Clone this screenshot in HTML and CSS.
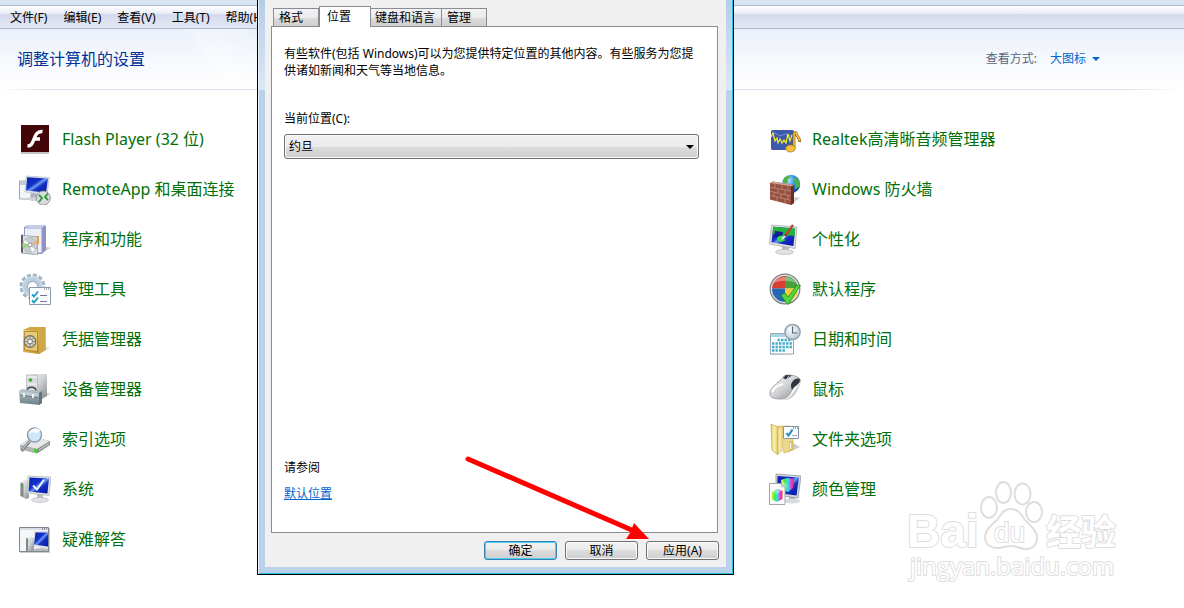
FILE: index.html
```html
<!DOCTYPE html>
<html lang="zh-CN">
<head>
<meta charset="utf-8">
<title>控制面板</title>
<link rel="stylesheet" href="styles.css">
</head>
<body>
<svg class="defs" width="0" height="0" aria-hidden="true">
  <defs>
    <linearGradient id="blue" x1="0" y1="0" x2="1" y2="1"><stop offset="0" stop-color="#0a1fae"/><stop offset=".4" stop-color="#1433cc"/><stop offset=".5" stop-color="#6f9bf0"/><stop offset=".62" stop-color="#1531c4"/><stop offset="1" stop-color="#0513a0"/></linearGradient>
    <linearGradient id="metal" x1="0" y1="0" x2="1" y2="1"><stop offset="0" stop-color="#fafafa"/><stop offset=".5" stop-color="#cfd1d4"/><stop offset="1" stop-color="#85888c"/></linearGradient>
    <linearGradient id="gold" x1="0" y1="0" x2="1" y2="1"><stop offset="0" stop-color="#f3de94"/><stop offset=".5" stop-color="#dcb64c"/><stop offset="1" stop-color="#a67a19"/></linearGradient>
    <linearGradient id="folder" x1="0" y1="0" x2="1" y2="0"><stop offset="0" stop-color="#e8cf6e"/><stop offset=".5" stop-color="#faf0b0"/><stop offset="1" stop-color="#e2c257"/></linearGradient>
    <linearGradient id="steel" x1="0" y1="0" x2="0" y2="1"><stop offset="0" stop-color="#b9c6cd"/><stop offset="1" stop-color="#6d7f89"/></linearGradient>
    <linearGradient id="rainbow" x1="0" y1="0" x2="1" y2="0"><stop offset="0" stop-color="#f5f233"/><stop offset=".3" stop-color="#43e552"/><stop offset=".55" stop-color="#2be4ef"/><stop offset=".78" stop-color="#ee35e0"/><stop offset="1" stop-color="#f33333"/></linearGradient>
    <radialGradient id="globe" cx=".35" cy=".3" r=".8"><stop offset="0" stop-color="#b6e8ff"/><stop offset=".5" stop-color="#2e8ad8"/><stop offset="1" stop-color="#0b3a93"/></radialGradient>
    <radialGradient id="dial" cx=".4" cy=".35" r=".7"><stop offset="0" stop-color="#fff"/><stop offset="1" stop-color="#b8c6d2"/></radialGradient>
  </defs>
</svg>

<div class="window">
  <div class="toolbar-edge"></div>
  <nav class="menubar" aria-label="菜单">
    <button type="button">文件(F)</button>
    <button type="button">编辑(E)</button>
    <button type="button">查看(V)</button>
    <button type="button">工具(T)</button>
    <button type="button">帮助(H)</button>
  </nav>
  <header class="heading">
    <h1>调整计算机的设置</h1>
    <div class="view-by"><span>查看方式:</span><button type="button">大图标</button></div>
  </header>

  <main class="items">
    <ul class="column">
      <li><a href="#">
        <svg viewBox="0 0 32 32"><rect x="2" y="3" width="28" height="28" fill="#999" opacity=".6"/><rect x="2" y="2" width="28" height="27" fill="#430507"/><path d="M23.500 8.500C18 8 16.500 12 15 16s-2.500 7-6.500 7M14.500 16H21" fill="none" stroke="#fff" stroke-width="3.400"/></svg>
        <span>Flash Player (32 位)</span></a></li>
      <li><a href="#">
        <svg viewBox="0 0 32 32"><path d="M.5 8h14v18H.5z" fill="#f4f5f7" stroke="#a0a6b2"/><path d="M1 9h13v3H1z" fill="#c2c9da"/><path d="M12 20l8 1-1 5-8-1z" fill="#aab0b8"/><ellipse cx="15" cy="26" rx="5" ry="2" fill="#cfd2d6"/><path d="M7 3l23.500 1.500L28 21.500 6 19z" fill="#dfe3ea" stroke="#b3b8c2" stroke-width=".6"/><path d="M8.200 4.200l20.800 1.400-2 14-20-2.200z" fill="url(#blue)"/><circle cx="24.300" cy="25" r="7" fill="#d9dbdc" stroke="#97999c"/><path d="M20 22l3 3-3 4M29 20.500l-3 3.500 3 3" fill="none" stroke="#2c9a35" stroke-width="1.800"/></svg>
        <span>RemoteApp 和桌面连接</span></a></li>
      <li><a href="#">
        <svg viewBox="0 0 32 32"><path d="M24 29l8-4-5-1z" fill="#ccc"/><path d="M5 4l5-2h16l1 2v23l-4 4H7z" fill="#8e92c5"/><path d="M5.500 5h17.500v25H5.500z" fill="#eceef8" stroke="#9599c4"/><path d="M6 5l4-3h16l-3 3z" fill="#c9cce9"/><path d="M13 13h7v8h-7z" fill="#e9a14b"/><path d="M2.500 12l16 2v18l-16-2z" fill="#dfe3e5" opacity=".9" stroke="#a3a8ac"/><path d="M2 12h2v18l-2-1z" fill="#5b6064"/><circle cx="11" cy="22" r="7.500" fill="#c7cccf" stroke="#a3a8ac" stroke-width=".6"/><path d="M11 22L6 17l-1.500 3zM11 22l5 5-3 2z" fill="#fff"/><path d="M11 22l-7-2 1 5z" fill="#8fdc6c"/><path d="M11 22l6-5 1 4z" fill="#e6b38a"/><circle cx="11" cy="22" r="2" fill="#fff" stroke="#8a9094"/></svg>
        <span>程序和功能</span></a></li>
      <li><a href="#">
        <svg viewBox="0 0 32 32"><circle cx="13.500" cy="13.500" r="11" fill="none" stroke="#9fb6c8" stroke-width="4" stroke-dasharray="3.800 1.960"/><circle cx="13.500" cy="13.500" r="7.500" fill="none" stroke="#bacedd" stroke-width="6"/><circle cx="13.500" cy="13.500" r="5" fill="#fff" stroke="#8ea6b8"/><circle cx="13.500" cy="13.500" r="9.500" fill="none" stroke="#d6e4ee"/><path d="M10.500 14.500h21v17h-21z" fill="#fbfcfd" stroke="#8d98a5"/><path d="M25 16h1m1 0h1m1 0h1" stroke="#556"/><path d="M13 21.500l2 2 4-5M13 27.500l2 2 4-5" fill="none" stroke="#169bc3" stroke-width="1.800"/><path d="M21 22.500h7M21 28.500h7" stroke="#77749c"/></svg>
        <span>管理工具</span></a></li>
      <li><a href="#">
        <svg viewBox="0 0 32 32"><path d="M25 28l6-3-5-1z" fill="#ddd"/><path d="M4 7l7-3h15.500v23L20 31 4 29z" fill="url(#gold)"/><path d="M4 7l7-3h15l-6 4z" fill="#d1a644"/><path d="M20 8l6.500-4v23L20 31z" fill="#cfa648"/><path d="M5.500 8.500h13v20l-13-1.500z" fill="#e8ca76" stroke="#9d7420" stroke-width=".7"/><circle cx="11" cy="18.500" r="5.800" fill="#d5d2c8" stroke="#77705f" stroke-width="1.200"/><path d="M11 13v11M5.500 18.500h11M7 14.500l8 8M15 14.500l-8 8" stroke="#77705f" stroke-width=".8"/><circle cx="11" cy="18.500" r="2.400" fill="#f4f2ed" stroke="#666" stroke-width=".8"/></svg>
        <span>凭据管理器</span></a></li>
      <li><a href="#">
        <svg viewBox="0 0 32 32"><path d="M24 24l8-3-4-1z" fill="#ccc"/><path d="M7 2l6-1h15v22l-5 3H8z" fill="url(#metal)"/><path d="M7.500 2h11v23h-11z" fill="#d8dadb" stroke="#a9acaf" stroke-width=".6"/><path d="M8 4h10M8 11h10" stroke="#f8f8f8"/><circle cx="11.500" cy="7" r="1.800" fill="#3dab2d"/><path d="M8 18c0-5 9-5 9 0" fill="none" stroke="#3c474e" stroke-width="1.600"/><path d="M0 18l3-2 20 2-2 14-20-2z" fill="url(#steel)"/><path d="M0 18l20 2.500-1 4L1 22z" fill="#c0ccd3"/><path d="M1 22l18 2.500" stroke="#53636d" stroke-width=".8"/><path d="M5 20v4M14 21v4" stroke="#f8f8f8" stroke-width="1.800"/><path d="M20 20l3-2v12l-3 2z" fill="#64747e"/></svg>
        <span>设备管理器</span></a></li>
      <li><a href="#">
        <svg viewBox="0 0 32 32"><path d="M1 22l12-8 18 4v4l-13 8.500L1 26z" fill="#888b8e"/><path d="M1 22l12-8 18 4-13 8z" fill="#e4e6e7"/><path d="M1 22l17 4v4.500L1 26z" fill="#b2b5b8"/><path d="M15 25.500l3 .8v3.400l-3-.8z" fill="#44cf27"/><path d="M20 27l10-6.500" stroke="#d8dadc"/><path d="M10.500 18.500L2.500 28" stroke="#7d8185" stroke-width="3"/><path d="M10 18.500L3 27" stroke="#d5d7da"/><circle cx="15.500" cy="12" r="7" fill="#d0e7f9" stroke="#8f9aa4" stroke-width="1.400"/><path d="M9.500 12c3-5 6 0 12-4-2-4-10-4-12 4z" fill="#f5fbff"/></svg>
        <span>索引选项</span></a></li>
      <li><a href="#">
        <svg viewBox="0 0 32 32"><path d="M1 9l4-2 5 1v17l-3 1-6-3z" fill="url(#metal)"/><path d="M1.500 9.500l3 1V24l-3-1z" fill="#85888a"/><circle cx="3" cy="13" r="1" fill="#38c022"/><path d="M18 20l6 1v5h-6z" fill="#b9bcc0"/><ellipse cx="21" cy="27" rx="8.500" ry="2.500" fill="#e0e2e4" stroke="#b3b6ba" stroke-width=".6"/><path d="M9 3l23 1-2 18.500L8 20z" fill="#e2e4df" stroke="#a8aaa8" stroke-width=".6"/><path d="M10.500 4.500l19.500 1-1.600 15L9.500 18.500z" fill="url(#blue)"/><path d="M14 12.500l4 4L25 6.500" fill="none" stroke="#f4f4f4" stroke-width="1.800"/></svg>
        <span>系统</span></a></li>
      <li><a href="#">
        <svg viewBox="0 0 32 32"><path d="M1 5h30v25H1z" fill="#ccc"/><path d="M.5 4.500h29v24H.5z" fill="#f4f6f8" stroke="#7f8791"/><path d="M1 5h28v2H1z" fill="#d8dde3"/><path d="M23 6h1m1 0h1m1 0h1" stroke="#445"/><path d="M7 15l4-1 4 1v13H7z" fill="url(#metal)"/><path d="M7 15l2 .5V28H7z" fill="#85888a"/><circle cx="8.500" cy="18" r="1" fill="#38c022"/><path d="M15 8h14v18l-14-3z" fill="#dde0e3"/><path d="M16.500 9.500H29v14l-14-2z" fill="url(#blue)"/><path d="M14 26l8-1 7 1v2H14z" fill="#b8bbbe"/></svg>
        <span>疑难解答</span></a></li>
    </ul>

    <ul class="column">
      <li><a href="#">
        <svg viewBox="0 0 32 32"><rect x="2" y="7" width="23" height="20" rx="1.500" fill="#3c59ad"/><path d="M2 12l4-2 5 3 5-2 9 2" fill="none" stroke="#8ea5df" stroke-width=".7"/><path d="M2 14l2-4 2 8 2-3 1 5 2-4 2 4 2-3 2 3 2-9 2 7 2-6" fill="none" stroke="#f5ee23" stroke-width="1.200"/><path d="M25 25V10h2c0 4 4.500 4 3.500 9" fill="none" stroke="#8d671b" stroke-width="2.800"/><path d="M25 25V10.500l2-.5c0 4 4.500 4 3.500 8" fill="none" stroke="#eebb38" stroke-width="1.600"/><ellipse cx="21.500" cy="25.500" rx="4.800" ry="3.500" fill="#f5c43c" stroke="#a8781b" stroke-width=".8"/></svg>
        <span>Realtek高清晰音频管理器</span></a></li>
      <li><a href="#">
        <svg viewBox="0 0 32 32"><path d="M24 30l7-5-5-1z" fill="#ccc"/><circle cx="22" cy="11" r="9.200" fill="url(#globe)"/><path d="M15 5c3-3 6-2 6-1s-3 2-2 4-4 3-5 1zM26 4c4 2 5 5 5 9l-4 3c-2-2 0-4-1-6s-1-3 0-6z" fill="#4ab748"/><path d="M1 10l3-1.500 21 3.500V30l-3 2L1 26.500z" fill="#99503f"/><path d="M22 13l3-1v18l-3 2z" fill="#6e2b20"/><path d="M1 10l3-1.500 21 3.500-3 1.200z" fill="#d2a294"/><path d="M1 14.200l21 3.800M1 18.300l21 4.700M1 22.400l21 5M6 11v4M13 12v4.500M19 13.500v4M9 16v4M16 17v4.500M5 19.500v4M12 21v4M19 22.500v4M8 24v4M16 26v4" stroke="#c29487" stroke-width=".7"/></svg>
        <span>Windows 防火墙</span></a></li>
      <li><a href="#">
        <svg viewBox="0 0 32 32"><path d="M13 22l7 2v5h-7z" fill="#b4b7bb"/><ellipse cx="15.500" cy="29" rx="9" ry="2.700" fill="#e0e1e3" stroke="#b7b9bb" stroke-width=".6"/><path d="M2.500 2L28 4l-2 21.500L.5 21z" fill="#e0e2e4" stroke="#a4a7aa" stroke-width=".7"/><path d="M4.200 3.800l22 1.700-1.800 17.500-21.900-3.700z" fill="url(#blue)"/><path d="M4.200 3.800l22 1.700-.6 8c-3-2-6 0-9-1-4-1-8-3-13-1z" fill="#27b33a"/><path d="M6 8l8 1-1 6-8-1z" fill="#121f93"/><path d="M8 15c3-3 6-3 9-1l-3 2 3 1-5 2-3-1z" fill="#31df45"/><path d="M15 14l9-12" stroke="#872f25" stroke-width="2.200"/><path d="M13 16l3-3" stroke="#d7dde5" stroke-width="2.200"/><path d="M17 11l6.500-8.500" stroke="#e0644b" stroke-width="1.200"/></svg>
        <span>个性化</span></a></li>
      <li><a href="#">
        <svg viewBox="0 0 32 32"><circle cx="16" cy="16" r="14.800" fill="#e5e7e8" stroke="#777c80" stroke-width="1.200"/><path d="M16 15.500V3A13 13 0 0 0 3 15.500z" fill="#d93f30"/><path d="M16 15.500V3a13 13 0 0 1 13 12.500z" fill="#479e3c"/><path d="M16 15.500V29A13 13 0 0 1 3 15.500z" fill="#2468b2"/><path d="M16 15.500V29a13 13 0 0 0 13-13.500z" fill="#f2ce36"/><path d="M5 10C8 3 22 1 27 10c-7-3-16-3-22 0z" fill="#fff" opacity=".35"/><path d="M12 22l4-2 3 4L28 12l3.500.5C27 19 23 25 20 31h-2z" fill="#53d53b" stroke="#278d20" stroke-width=".8"/></svg>
        <span>默认程序</span></a></li>
      <li><a href="#">
        <svg viewBox="0 0 32 32"><path d="M1 31l24 1v1H2z" fill="#ccc"/><path d="M1.500 10.500h23v20.500h-23z" fill="#fafcfd" stroke="#9aa8b2"/><path d="M2 11h22v3H2z" fill="#a8d5e6"/><path d="M8.500 17H23M3 20.500h20M3 24h20M3 27.500h13" stroke="#42adc8" stroke-width="2.300" stroke-dasharray="2.400 1.100"/><circle cx="23.500" cy="9" r="7.600" fill="url(#dial)" stroke="#95a4b0" stroke-width="1.500"/><path d="M23.500 3.500V10h5" fill="none" stroke="#52697c" stroke-width="1.200"/></svg>
        <span>日期和时间</span></a></li>
      <li><a href="#">
        <svg viewBox="0 0 32 32"><path d="M13 27c9 0 12-10 19-18-4 11-8 19-19 18z" fill="#ccc"/><path d="M1 19C3 12 12 8 15 3c3-2 13-1 16 3 2 5-5 5-8 11-2 5-5 9-11 9C5 26 0 25 1 19z" fill="url(#metal)" stroke="#888b8f" stroke-width=".7"/><path d="M24 8c3-3 6-3 7-1 0 4-5 5-8 10-1-4-2-5 1-9z" fill="#303541"/><path d="M14 5l3-3 6 .5-3 2-3 2z" fill="#303541"/><path d="M17 7l3-4" stroke="#d9dadd"/><path d="M3 19c2-5 7-7 11-8" fill="none" stroke="#fff" stroke-width="2"/></svg>
        <span>鼠标</span></a></li>
      <li><a href="#">
        <svg viewBox="0 0 32 32"><path d="M18 30l13-6-7-4z" fill="#ccc"/><path d="M9 3h12l3 3v21l-9 3z" fill="#edd88a" stroke="#c9ae5d" stroke-width=".6"/><path d="M2 1l7 3v28l-6-5z" fill="url(#folder)" stroke="#c1a34d" stroke-width=".7"/><path d="M9 4l4 1v23l-4 3z" fill="#f5e69c" stroke="#cbb262" stroke-width=".6"/><path d="M20 18h4v9l-4 1z" fill="#dfbf5c"/><path d="M21.500 20v6" stroke="#fff" stroke-width="1.300"/><path d="M14.500 3.500h15v12h-15z" fill="#fafcff" stroke="#8794a2"/><path d="M24 5h1m1 0h1m1 0h1" stroke="#445"/><path d="M17.500 10l2 2.500 4-6" fill="none" stroke="#178dbd" stroke-width="2"/><path d="M23 12.500h5" stroke="#9ba1b1"/></svg>
        <span>文件夹选项</span></a></li>
      <li><a href="#">
        <svg viewBox="0 0 32 32"><path d="M20 21l6 1v5h-6z" fill="#a9acaf"/><ellipse cx="23" cy="28" rx="8" ry="2.500" fill="#d8dadc"/><path d="M7 1l25 2-3 22-22-3z" fill="#d5d8db" stroke="#92959a" stroke-width=".8"/><path d="M8.500 3L30 4.500 27.500 22.500 8 20z" fill="url(#blue)"/><path d="M12 7l6-2 7 1-1 9-5 4-6-3z" fill="url(#rainbow)"/><path d="M13 8l5 3-1 7-4-2z" fill="#fff" opacity=".35"/><path d="M.5 10.500h11l4.500 4v17H.5z" fill="#fcfcfc" stroke="#a3a6a9"/><path d="M11.500 10.500v4H16z" fill="#ccd0d4"/><path d="M2.500 19l6-3 5 1.500V26L8 29l-5-2.500z" fill="url(#rainbow)"/><path d="M2.500 19l5.500 2 5.500-3.500-5-1.500z" fill="#fff" opacity=".35"/></svg>
        <span>颜色管理</span></a></li>
    </ul>
  </main>

  <svg class="watermark" viewBox="0 0 220 116" role="img" aria-label="Baidu 经验">
    <g class="outline">
      <ellipse cx="85" cy="37.500" rx="8" ry="10.500"/>
      <ellipse cx="99.500" cy="22.500" rx="7.500" ry="10.500"/>
      <ellipse cx="118.500" cy="24" rx="8" ry="10.500"/>
      <ellipse cx="130" cy="42" rx="8" ry="10"/>
      <path d="M107 39c-8 0-10 6-14 11-4 4-12 9-12 17 0 7 5 11 12 11 6 0 8-2 14-2s9 3 15 3c7 0 12-5 11-13-1-7-8-11-12-16-4-6-7-11-14-11z"/>
      <text class="mark-name" x="3" y="77">Bai</text>
      <text class="mark-du" x="90" y="72">du</text>
      <text class="mark-cjk" x="142" y="75">经验</text>
      <text class="mark-url" x="6" y="105">jingyan.baidu.com</text>
    </g>
  </svg>
</div>

<section class="dialog" role="dialog" aria-label="区域和语言">
  <div class="dialog-body">
    <div class="tabs" role="tablist">
      <button type="button" role="tab" aria-selected="false">格式</button>
      <button type="button" role="tab" aria-selected="true" class="active">位置</button>
      <button type="button" role="tab" aria-selected="false" class="tight">键盘和语言</button>
      <button type="button" role="tab" aria-selected="false">管理</button>
    </div>
    <div class="panel" role="tabpanel">
      <p>有些软件(包括 Windows)可以为您提供特定位置的其他内容。有些服务为您提<br>供诸如新闻和天气等当地信息。</p>
      <label for="location">当前位置(C):</label>
      <div class="combo"><select id="location"><option>约旦</option></select></div>
      <div class="see-also"><span>请参阅</span><a href="#">默认位置</a></div>
    </div>
    <div class="actions">
      <button type="button" class="default">确定</button>
      <button type="button">取消</button>
      <button type="button">应用(A)</button>
    </div>
  </div>
  <svg class="pointer" viewBox="0 0 190 90" aria-hidden="true"><path d="M6 7l166 72" stroke="#f00" stroke-width="5" stroke-linecap="round"/><path d="M172 71l15 16h-23l4-6z" fill="#f00"/></svg>
</section>
</body>
</html>
```
FILE: styles.css
```css
* {
  box-sizing: border-box;
}

body {
  margin: 0;
  background: #fff;
  color: #000;
  font: 12px/17px "Noto Sans", "Noto Sans CJK SC", sans-serif;
}

button,
select {
  margin: 0;
  padding: 0;
  border: 0;
  background: none;
  color: inherit;
  font: inherit;
}

.defs {
  position: absolute;
}

.window {
  position: relative;
  min-height: 100vh;
  overflow: hidden;
}

.toolbar-edge {
  height: 5px;
  background: #d7e5f2;
}

.menubar {
  display: flex;
  gap: 16px;
  height: 24px;
  padding: 0 10px;
  border-top: 1px solid #b3b9c9;
  border-bottom: 1px solid #b3b7cb;
  background: linear-gradient(#fff, #e8ebf5 8px, #d4daed 8px, #e2e8f4);
}

.heading {
  display: flex;
  align-items: center;
  justify-content: space-between;
  height: 61px;
  padding: 0 84px 2px 17px;
  background:
    linear-gradient(90deg, #fff, #d9e1ec 40px, #d9e1ec calc(100% - 60px), #fff) bottom / 100% 1px no-repeat,
    linear-gradient(60deg, transparent 190px, #ffffff55 200px, transparent 250px),
    linear-gradient(#ebf1fa, #fff 58px);
}

.heading h1 {
  margin: 0;
  color: #039;
  font-size: 16px;
  font-weight: 400;
  line-height: 24px;
}

.view-by {
  display: flex;
  gap: 13px;
  color: #5a677b;
}

.view-by button {
  display: flex;
  align-items: center;
  gap: 6px;
  color: #06c;
}

.view-by button::after {
  content: "";
  border: 4px solid transparent;
  border-top-color: #06c;
  border-bottom-width: 0;
}

.items {
  display: grid;
  grid-template-columns: 750px 1fr;
  padding: 24px 0 0 19px;
}

.column {
  margin: 0;
  padding: 0;
  list-style: none;
}

.column a {
  display: flex;
  align-items: center;
  gap: 11px;
  height: 50px;
  color: #00700b;
  font-size: 16px;
  line-height: 24px;
  text-decoration: none;
  white-space: nowrap;
}

.column svg {
  flex: none;
  width: 32px;
  height: 32px;
}

.watermark {
  position: absolute;
  right: 60px;
  bottom: 22px;
  width: 220px;
  height: 116px;
}

.outline {
  fill: #fff;
  stroke: #dedede;
  stroke-width: 2px;
  stroke-linejoin: round;
}

.outline text {
  font-family: "Liberation Sans", "Noto Sans CJK SC", sans-serif;
  font-weight: 700;
  paint-order: stroke;
}

.outline .mark-name {
  font-size: 46px;
}

.outline .mark-du {
  font-size: 28px;
  font-weight: 400;
}

.outline .mark-cjk {
  font-size: 35px;
}

.outline .mark-url {
  font-family: "Open Sans", sans-serif;
  font-size: 24px;
  font-weight: 400;
}

.dialog {
  position: absolute;
  top: 0;
  left: 257px;
  width: 477px;
  padding: 0 6px 6px;
  border: 1px solid #000;
  border-top: 0;
  background: linear-gradient(#b4cde8, #dbe8f6 90px, #b9d1ea 90px);
  box-shadow: inset 1px 0 #eaf3fb, inset -1px -1px #25bfdf;
}

.dialog-body {
  margin: 0 1px 1px;
  padding: 6px 7px 7px 6px;
  background: #f0f0f0;
}

.tabs {
  display: flex;
  align-items: flex-end;
  padding-left: 2px;
}

.tabs button {
  height: 18px;
  padding: 0 15px 0 5px;
  border: 1px solid #898c95;
  border-bottom: 0;
  background: linear-gradient(#f3f3f3, #ebebeb 50%, #dcdcdc 50%, #d0d0d0);
  white-space: nowrap;
}

.tabs button + button {
  border-left-width: 0;
}

.tabs .active,
.tabs button + .active {
  position: relative;
  height: 21px;
  margin-bottom: -1px;
  padding: 0 19px 2px 7px;
  border-left-width: 1px;
  background: #fff;
}

.tabs .tight {
  padding: 0 6px 0 4px;
}

.panel {
  display: flex;
  flex-direction: column;
  min-height: 507px;
  margin-right: 1px;
  padding: 18px 18px 30px 12px;
  border: 1px solid #898c95;
  background: #fff;
}

.panel p {
  margin: 0 0 31px;
  white-space: nowrap;
}

.combo {
  position: relative;
  margin-top: 7px;
}

.combo select {
  display: block;
  width: 100%;
  height: 25px;
  padding: 0 4px;
  border: 1px solid #707070;
  border-radius: 3px;
  background: linear-gradient(#f2f2f2, #ebebeb 50%, #dcdcdc 50%, #cfcfcf);
  box-shadow: inset 0 0 0 1px #fafafa;
  appearance: none;
}

.combo::after {
  content: "";
  position: absolute;
  top: 11px;
  right: 5px;
  border: 4px solid transparent;
  border-top-color: #000;
  border-bottom-width: 0;
  pointer-events: none;
}

.see-also {
  display: flex;
  flex-direction: column;
  align-items: flex-start;
  gap: 9px;
  margin-top: auto;
}

.see-also a {
  color: #06c;
}

.actions {
  display: flex;
  justify-content: flex-end;
  gap: 8px;
  padding-top: 8px;
}

.actions button {
  width: 73px;
  height: 19px;
  border: 1px solid #707070;
  border-radius: 3px;
  background: linear-gradient(#f2f2f2, #ebebeb 50%, #dcdcdc 50%, #cfcfcf);
  box-shadow: inset 0 0 0 1px #fafafa;
  line-height: 16px;
}

.actions .default {
  border-color: #3c7fb1;
  box-shadow: inset 0 0 0 1px #48d0f7;
}

.pointer {
  position: absolute;
  top: 452px;
  left: 204px;
  width: 190px;
  height: 90px;
}
```
